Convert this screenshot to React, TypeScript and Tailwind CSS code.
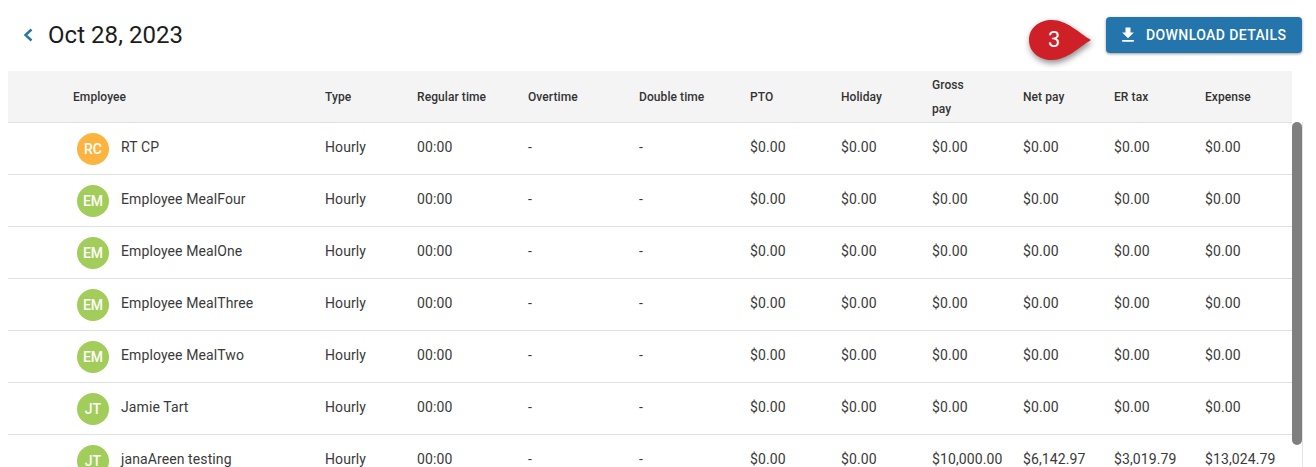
const GRID = 'grid grid-cols-[65px_252px_92px_111px_111px_111px_91px_91px_91px_91px_91px_78px]'

const rows = [
  { initials: 'RC', name: 'RT CP', color: 'bg-[#fbb440]' },
  { initials: 'EM', name: 'Employee MealFour', color: 'bg-[#a2cd5a]' },
  { initials: 'EM', name: 'Employee MealOne', color: 'bg-[#a2cd5a]' },
  { initials: 'EM', name: 'Employee MealThree', color: 'bg-[#a2cd5a]' },
  { initials: 'EM', name: 'Employee MealTwo', color: 'bg-[#a2cd5a]' },
  { initials: 'JT', name: 'Jamie Tart', color: 'bg-[#a2cd5a]' },
  {
    initials: 'JT',
    name: 'janaAreen testing',
    color: 'bg-[#a2cd5a]',
    gross: '$10,000.00',
    net: '$6,142.97',
    tax: '$3,019.79',
    expense: '$13,024.79',
  },
]

function Callout() {
  return (
    <div className="absolute left-[1028px] top-[16px] flex h-[48px] w-[66px] items-center">
      <svg width="66" height="48" viewBox="0 0 66 48" className="absolute left-0 top-0 drop-shadow-[1px_3px_3px_rgba(0,0,0,0.45)]">
        <path d="M1 24C1 12 11 4 24 4C39 4 51 17 63 24C51 31 39 44 24 44C11 44 1 36 1 24Z" fill="#cf2027" />
      </svg>
      <span className="relative ml-[20px] text-[22px] leading-none text-white">3</span>
    </div>
  )
}

export default function App() {
  return (
    <div className="relative h-[467px] w-[1316px] overflow-hidden bg-white font-['Roboto',sans-serif] text-[#212121]">
      {/* Title bar */}
      <div className="flex h-[71px] items-start justify-between pl-[22px] pr-[14px]">
        <div className="mt-[19px] flex items-center gap-[14px]">
          <svg width="12" height="32" viewBox="0 0 12 32" fill="none" stroke="#2575ad" strokeWidth="2.4">
            <path d="M9.5 10.5L3.5 16L9.5 21.5" />
          </svg>
          <h1 className="text-2xl leading-8 font-[450] tracking-[0.05px] text-[#1c1c1c]">Oct 28, 2023</h1>
        </div>
        <button className="mt-[17px] flex h-[36px] w-[196px] items-center rounded bg-[#2575ad] pb-[1px] pl-[12px] text-sm font-medium tracking-[0.4px] text-white shadow-[0_1px_3px_rgba(0,0,0,0.4)]">
          <svg width="20" height="20" viewBox="0 0 24 24" fill="white">
            <path d="M19 9h-4V3H9v6H5l7 7 7-7zM5 18v2h14v-2H5z" />
          </svg>
          <span className="ml-[8px]">DOWNLOAD DETAILS</span>
        </button>
      </div>
      <Callout />

      <div className="flex pl-[8px]">
        <div className="w-[1284px] shrink-0">
          {/* Header */}
          <div className={`${GRID} h-[52px] items-center border-b border-[#e0e0e0] bg-[#f4f4f4] pt-[1px] text-xs font-medium tracking-[0.08px] text-[#333]`}>
            <div />
            <div>Employee</div>
            <div>Type</div>
            <div>Regular time</div>
            <div>Overtime</div>
            <div>Double time</div>
            <div>PTO</div>
            <div>Holiday</div>
            <div className="leading-6">
              Gross
              <br />
              pay
            </div>
            <div>Net pay</div>
            <div>ER tax</div>
            <div>Expense</div>
          </div>

          {/* Rows */}
          {rows.map((row) => (
            <div key={row.name} className={`${GRID} h-[52px] items-center border-b border-[#e0e0e0] pb-[3px] text-sm tracking-[0.1px] text-[#3a3a3a]`}>
              <div />
              <div className="flex items-center gap-[12px] pl-[4px]">
                <div className={`mt-[4px] flex h-8 w-8 items-center justify-center rounded-full text-sm font-medium tracking-normal text-white ${row.color}`}>
                  {row.initials}
                </div>
                <span>{row.name}</span>
              </div>
              <div>Hourly</div>
              <div>00:00</div>
              <div>-</div>
              <div>-</div>
              <div>$0.00</div>
              <div>$0.00</div>
              <div>{row.gross ?? '$0.00'}</div>
              <div>{row.net ?? '$0.00'}</div>
              <div>{row.tax ?? '$0.00'}</div>
              <div>{row.expense ?? '$0.00'}</div>
            </div>
          ))}
        </div>

        {/* Scrollbar */}
        <div className="mt-[51px] h-[345px] w-[11px] shrink-0 border-r border-[#e3e3e3]">
          <div className="h-[323px] w-[10px] rounded-[5px] bg-[#7f7f7f]" />
        </div>
      </div>
    </div>
  )
}
